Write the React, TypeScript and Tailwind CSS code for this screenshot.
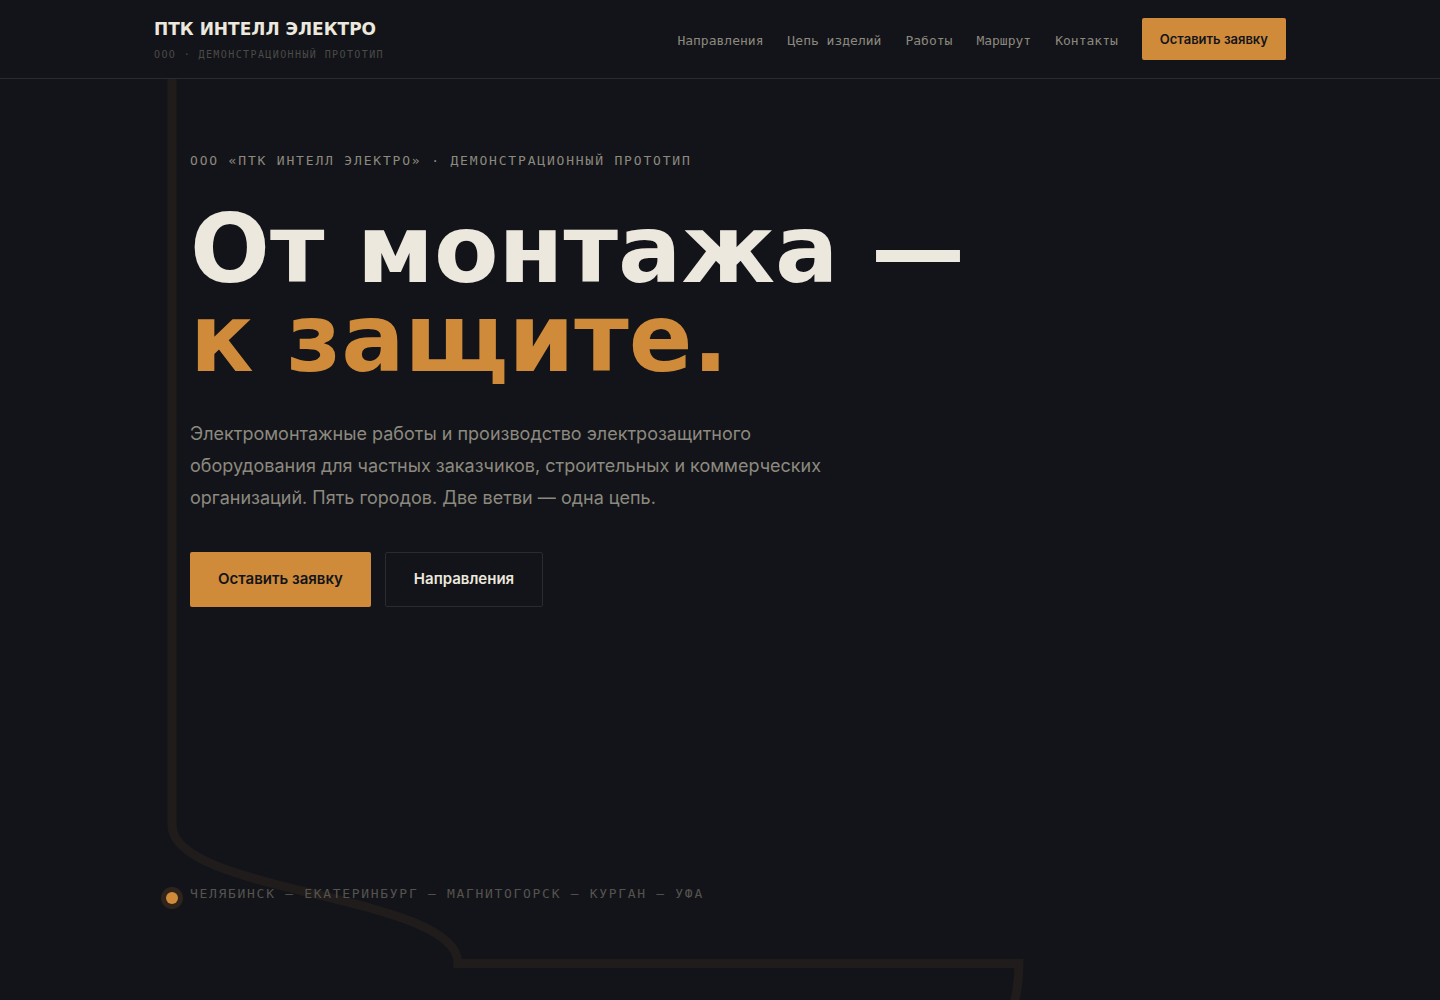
const mono = "font-['DejaVu_Sans_Mono',monospace]"
const display = "font-['DejaVu_Sans',sans-serif]"

const navLinks = [
  { href: "#directions", label: "Направления" },
  { href: "#products", label: "Цепь изделий" },
  { href: "#works", label: "Работы" },
  { href: "#route", label: "Маршрут" },
  { href: "#contacts", label: "Контакты" },
]

function Header() {
  return (
    <header className="relative z-10 border-b border-[#2a2b30] bg-[#131419]">
      <div className="mx-auto flex min-h-[78px] max-w-[1180px] items-center justify-between gap-6 px-6">
        <a href="#top" className="flex flex-col gap-2 pt-1">
          <span className={`${display} text-[17px] leading-5 font-bold text-[#ece8dd]`}>
            ПТК ИНТЕЛЛ ЭЛЕКТРО
          </span>
          <span className={`${mono} text-[10px] leading-4 tracking-[0.14em] text-[#4b4a47] uppercase`}>
            ООО · Демонстрационный прототип
          </span>
        </a>
        <nav className="flex items-center gap-6">
          {navLinks.map((link) => (
            <a
              key={link.href}
              href={link.href}
              className={`${mono} pt-1 text-[13px] leading-5 whitespace-nowrap text-[#8c897f]`}
            >
              {link.label}
            </a>
          ))}
          <a
            href="#request"
            className="flex h-[42px] items-center rounded-xs bg-[#d08b3a] px-[18px] pt-0.5 text-[13px] font-semibold whitespace-nowrap text-[#131419]"
          >
            Оставить заявку
          </a>
        </nav>
      </div>
    </header>
  )
}

function Wire() {
  return (
    <svg
      aria-hidden="true"
      className="pointer-events-none absolute top-0 left-6"
      width="900"
      height="940"
      viewBox="0 0 900 940"
      fill="none"
    >
      <path
        d="M18 -10V746C18 815 304 815 304 884.5H865C865 905 862 918 856 940"
        stroke="#201c1b"
        strokeWidth="9"
      />
      <circle cx="18" cy="819" r="11" fill="#2f241c" />
      <circle cx="18" cy="819" r="6" fill="#d08b3a" />
    </svg>
  )
}

function Hero() {
  return (
    <section id="top" className="flex grow flex-col">
      <div className="relative mx-auto flex w-full max-w-[1180px] grow flex-col px-6">
        <Wire />
        <div className="relative flex grow flex-col pt-[72px] pb-24 pl-9">
          <p className={`${mono} text-[13px] leading-5 tracking-[0.14em] text-[#8c897f] uppercase`}>
            ООО «ПТК Интелл Электро» · Демонстрационный прототип
          </p>
          <h1 className={`${display} mt-[34px] text-[94px] leading-[89px] font-bold text-[#ece8dd]`}>
            От монтажа —
            <br />
            <span className="text-[#d08b3a]">к защите.</span>
          </h1>
          <p className="mt-[35px] text-[18px] leading-8 text-[#8c897f]">
            Электромонтажные работы и производство электрозащитного
            <br />
            оборудования для частных заказчиков, строительных и коммерческих
            <br />
            организаций. Пять городов. Две ветви — одна цепь.
          </p>
          <div className="mt-[38px] flex gap-[14px] text-[15px] font-semibold">
            <a
              href="#request"
              className="flex h-[55px] items-center rounded-xs bg-[#d08b3a] px-7 text-[#131419]"
            >
              Оставить заявку
            </a>
            <a
              href="#directions"
              className="flex h-[55px] items-center rounded-xs border border-[#2a2b30] px-7 text-[#ece8dd]"
            >
              Направления
            </a>
          </div>
          <p className={`${mono} mt-auto text-[13px] leading-5 tracking-[0.13em] text-[#55534e] uppercase`}>
            Челябинск — Екатеринбург — Магнитогорск — Курган — Уфа
          </p>
        </div>
      </div>
    </section>
  )
}

export default function App() {
  return (
    <div className="flex min-h-screen flex-col overflow-hidden bg-[#131419] font-['Inter',sans-serif]">
      <Header />
      <Hero />
    </div>
  )
}
